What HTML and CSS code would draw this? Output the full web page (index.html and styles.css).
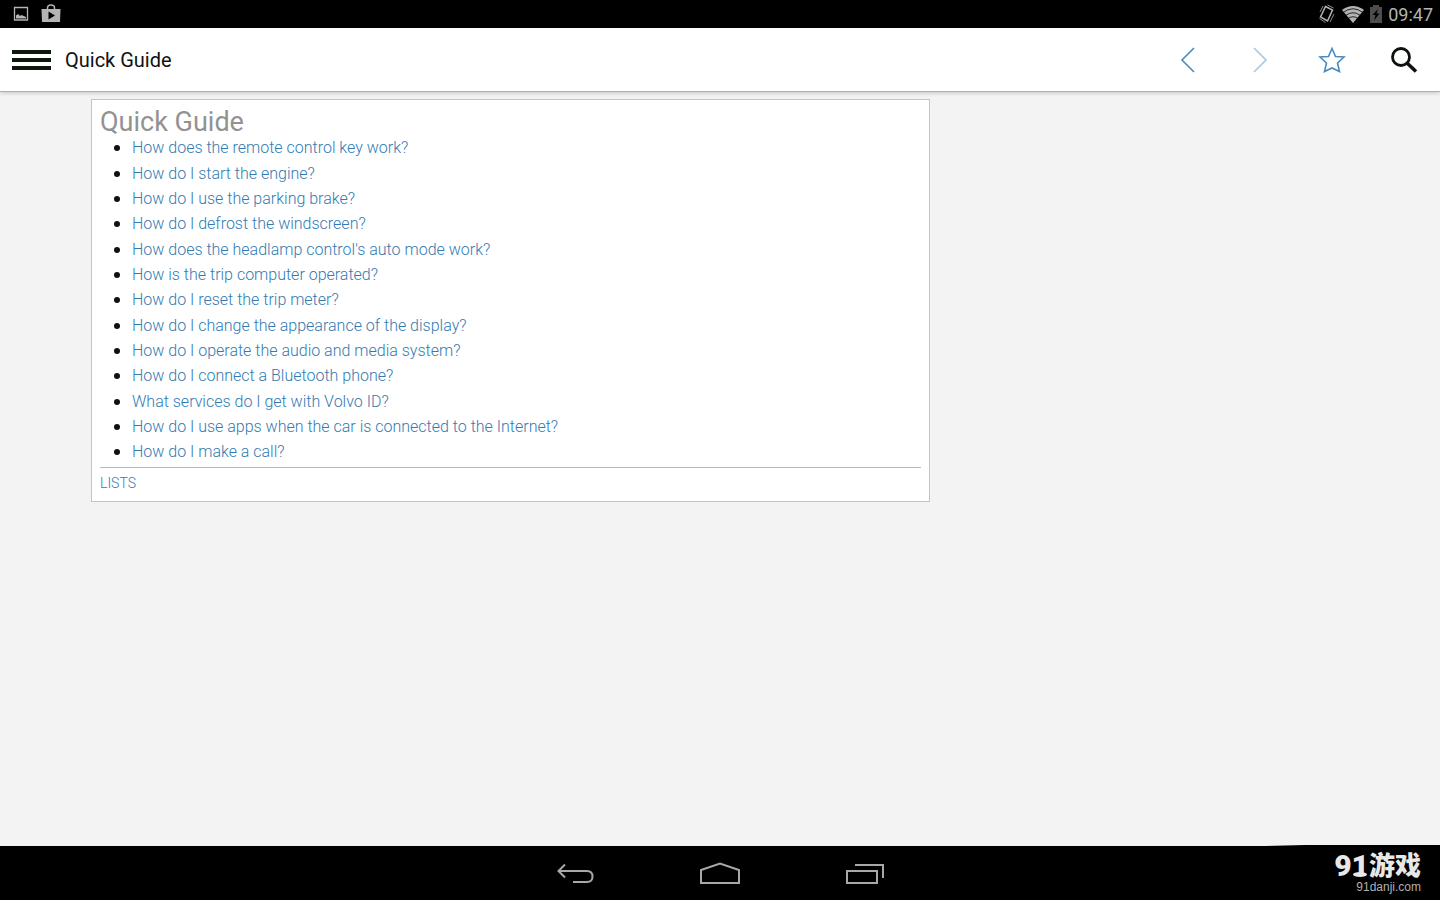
FILE: index.html
```
<!DOCTYPE html>
<html lang="en">

<head>
    <meta charset="UTF-8">
    <meta name="viewport" content="width=device-width, initial-scale=1.0">
    <title>Quick Guide</title>

    <link rel="stylesheet" href="styles.css">
</head>

<body>
    <!-- status bar -->
    <div class="status">
        <div class="status__group">
            <svg width="16" height="16" viewBox="0 0 16 16" fill="none">
                <path d="M1.500 1.500h13v12.500h-13z" stroke="#b4b4b4" stroke-width="1.300" />
                <path d="M3 12.500v-3l2-1.500 2 2 1.500-1 4.500 2v1.500z" fill="#b4b4b4" />
            </svg>
            <svg width="20" height="20" viewBox="0 0 20 20" fill="none">
                <path d="M6.500 5V4Q6.500 1 10 1t3.500 3V5" stroke="#b4b4b4" stroke-width="1.500" />
                <path d="M.5 5h19L19 18H1z" fill="#b4b4b4" />
                <path d="M7.500 7.500v8l6.500-4z" fill="#000" />
            </svg>
        </div>
        <div class="status__group status__group--right">
            <svg width="18" height="20" viewBox="0 0 18 20" fill="none" stroke="#b4b4b4">
                <path d="M7.500 2.500l7 3.500-5 11-7-4z" stroke-width="1.500" />
                <path d="M2 8l3-6M1.500 14.500l6 4M16 10l-4 8M9.500 1l6 3" stroke-width=".8" />
            </svg>
            <svg width="22" height="18" viewBox="0 0 22 18" fill="none">
                <path d="M0 5Q11-3 22 5L11 18z" fill="#b4b4b4" />
                <path d="M1 7.500Q11 0 21 7.500M3.500 10.500Q11 5 18.500 10.500M6 13.500Q11 10 16 13.500" stroke="#000" stroke-width=".8" />
            </svg>
            <svg width="12" height="18" viewBox="0 0 12 18">
                <path d="M0 2h3V0h6v2h3v16H0z" fill="#4d4d4d" />
                <path d="M8 4L2.500 10h3l-1.500 5.500 5.500-7h-3z" fill="#000" />
            </svg>
            <span class="status__time">09:47</span>
        </div>
    </div>

    <!-- title bar -->
    <header class="header">
        <button class="header__menu" type="button" aria-label="Menu">
            <span class="header__line"></span>
            <span class="header__line"></span>
            <span class="header__line"></span>
        </button>
        <span class="header__title">Quick Guide</span>
        <div class="header__tools">
            <button class="tool" type="button" aria-label="Back">
                <svg width="28" height="28" viewBox="0 0 28 28" fill="none" stroke="#4a8abf" stroke-width="1.600">
                    <path d="M20 2L8 14l12 12" />
                </svg>
            </button>
            <button class="tool" type="button" aria-label="Forward" disabled>
                <svg width="28" height="28" viewBox="0 0 28 28" fill="none" stroke="#a9c8e0" stroke-width="1.600">
                    <path d="M8 2l12 12L8 26" />
                </svg>
            </button>
            <button class="tool" type="button" aria-label="Favourite">
                <svg width="28" height="28" viewBox="0 0 28 28" fill="none" stroke="#4a8abf" stroke-width="1.600">
                    <path d="M14 2.500l3.500 8 8.500.5-6.500 6 2 8.500L14 22l-7.500 3.500 2-8.500L2 11l8.500-.5z" />
                </svg>
            </button>
            <button class="tool" type="button" aria-label="Search">
                <svg width="28" height="28" viewBox="0 0 28 28" fill="none" stroke="#0b120b">
                    <circle cx="11" cy="11" r="8.500" stroke-width="2.800" />
                    <path d="M17 17l9 8.500" stroke-width="3.500" />
                </svg>
            </button>
        </div>
    </header>

    <main class="content">
        <section class="card">
            <h1 class="card__title">Quick Guide</h1>
            <ul class="guide">
                <li><a href="#">How does the remote control key work?</a></li>
                <li><a href="#">How do I start the engine?</a></li>
                <li><a href="#">How do I use the parking brake?</a></li>
                <li><a href="#">How do I defrost the windscreen?</a></li>
                <li><a href="#">How does the headlamp control's auto mode work?</a></li>
                <li><a href="#">How is the trip computer operated?</a></li>
                <li><a href="#">How do I reset the trip meter?</a></li>
                <li><a href="#">How do I change the appearance of the display?</a></li>
                <li><a href="#">How do I operate the audio and media system?</a></li>
                <li><a href="#">How do I connect a Bluetooth phone?</a></li>
                <li><a href="#">What services do I get with Volvo ID?</a></li>
                <li><a href="#">How do I use apps when the car is connected to the Internet?</a></li>
                <li><a href="#">How do I make a call?</a></li>
            </ul>
            <div class="card__footer"><a href="#">LISTS</a></div>
        </section>
    </main>

    <!-- system buttons -->
    <nav class="navbar">
        <button class="navbar__button" type="button" aria-label="Back">
            <svg width="40" height="28" viewBox="0 0 40 28" fill="none" stroke="#a8a8a8" stroke-width="2">
                <path d="M10 4.500L3.500 11l6.500 6.500M3.500 11H32q5.500 0 5.500 5.500T32 22H18" />
            </svg>
        </button>
        <button class="navbar__button" type="button" aria-label="Home">
            <svg width="40" height="28" viewBox="0 0 40 28" fill="none" stroke="#a8a8a8" stroke-width="2">
                <path d="M1 23V10l19-6.500L39 10v13z" />
            </svg>
        </button>
        <button class="navbar__button" type="button" aria-label="Recent apps">
            <svg width="40" height="28" viewBox="0 0 40 28" fill="none" stroke="#a8a8a8" stroke-width="2">
                <path d="M2 11h30v12H2zM10 5h28v13" />
            </svg>
        </button>
        <div class="mark">
            <div class="mark__name"><span class="mark__number">91</span><span>游戏</span></div>
            <div class="mark__site">91danji.com</div>
        </div>
    </nav>
</body>

</html>
```
FILE: styles.css
```
* {
    box-sizing: border-box;
}

body {
    display: flex;
    flex-direction: column;
    min-height: 100vh;
    margin: 0;
    background-color: #f3f3f3;
    color: #111;
    font-family: Roboto, "Noto Sans CJK SC", sans-serif;
    font-size: 16px;
}

button {
    padding: 0;
    border: 0;
    background: none;
    cursor: pointer;
}

svg {
    display: block;
}

a {
    color: #337ab2;
    text-decoration: none;
}

/* status bar */
.status {
    display: flex;
    justify-content: space-between;
    height: 28px;
    padding: 0 7px 0 13px;
    background-color: #000;
}

.status__group {
    display: flex;
    align-items: center;
    gap: 12px;
}

.status__group--right {
    gap: 6px;
}

.status__time {
    color: #b4b4b4;
    font-size: 18px;
}

/* title bar */
.header {
    display: flex;
    align-items: center;
    height: 64px;
    padding: 0 0 0 12px;
    background-color: #fff;
    border-bottom: 1px solid #b0b0b0;
    box-shadow: 0 1px 4px rgba(0, 0, 0, .2);
}

.header__menu {
    display: flex;
    flex-direction: column;
    gap: 4px;
    width: 39px;
}

.header__line {
    height: 4px;
    background-color: #0b180b;
}

.header__title {
    margin-left: 14px;
    font-size: 20px;
}

.header__tools {
    display: flex;
    margin-left: auto;
}

.tool {
    display: flex;
    align-items: center;
    justify-content: center;
    width: 72px;
    height: 63px;
}

/* page */
.content {
    display: grid;
    grid-template-columns: 2fr 1fr;
    align-items: start;
    flex: 1;
    width: 100%;
    max-width: 1258px;
    margin: 0 auto;
    padding-top: 7px;
}

.card {
    padding: 9px 8px 8px;
    background-color: #fff;
    border: 1px solid #c4c4c4;
}

.card__title {
    margin: 0;
    color: #929292;
    font-size: 27px;
    font-weight: 400;
    line-height: 26px;
}

.guide {
    margin: 0;
    padding: 0 0 2px 32px;
    font-weight: 300;
    line-height: 24px;
}

.guide li:nth-child(3n + 1) {
    margin-bottom: 1px;
}

.guide li::marker {
    font-size: 18px;
}

.card__footer {
    padding-top: 6px;
    border-top: 1px solid #b8b8b8;
    font-size: 14px;
    font-weight: 300;
    line-height: 19px;
}

/* system buttons */
.navbar {
    position: relative;
    display: flex;
    justify-content: center;
    align-items: center;
    gap: 105px;
    height: 54px;
    padding-top: 2px;
    background-color: #000;
}

.navbar::before {
    content: "";
    position: absolute;
    top: -1px;
    right: 0;
    width: 175px;
    height: 1px;
    background: linear-gradient(to right, transparent, #000 40px);
}

.mark {
    position: absolute;
    right: 19px;
    bottom: 6px;
    color: #e8e8e8;
    text-align: right;
}

.mark__name {
    display: flex;
    align-items: center;
    justify-content: flex-end;
    font-size: 26px;
    font-weight: 900;
    line-height: 28px;
}

.mark__number {
    position: relative;
    font-size: 30px;
}

/* base under the one */
.mark__number::after {
    content: "";
    position: absolute;
    right: 2px;
    bottom: 3px;
    width: 14px;
    height: 5px;
    background-color: #e8e8e8;
    border-radius: 50%;
}

.mark__site {
    color: #b0b0b0;
    font-family: "Liberation Sans", sans-serif;
    font-size: 12px;
    line-height: 14px;
}
```
